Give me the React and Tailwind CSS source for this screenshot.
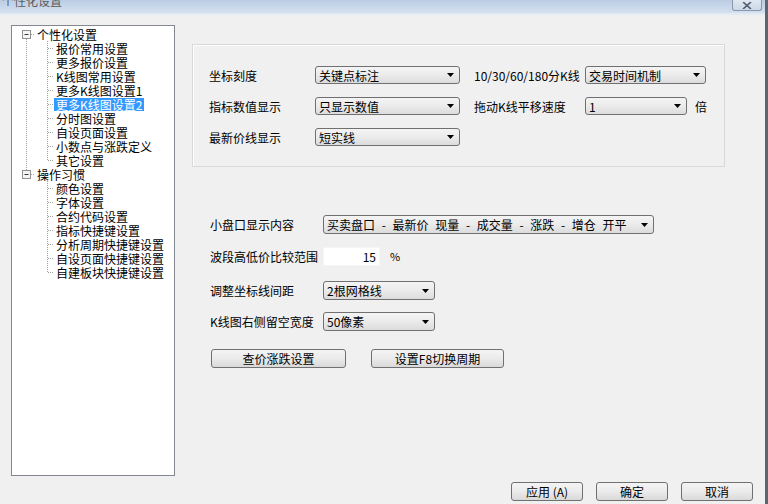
import React from "react";

const FONT = { fontFamily: '"Noto Sans CJK SC", "Liberation Sans", sans-serif' };

const Arrow = () => (
  <svg width="7" height="4" viewBox="0 0 7 4" className="shrink-0">
    <path d="M0 0 L7 0 L3.5 4 Z" fill="#000" />
  </svg>
);

const Select = ({ value, w, h = "h-[18px]", wide }) => (
  <div
    className={`${w} ${h} flex items-center justify-between border border-[#707070] rounded-[3px] pl-[3px] pr-[5px] bg-gradient-to-b from-[#f4f4f4] via-[#ebebeb] to-[#dcdcdc] text-[12px] text-black shrink-0`}
  >
    <span className={`whitespace-nowrap leading-[15px] ${wide ? "[word-spacing:4px]" : ""}`}>{value}</span>
    <Arrow />
  </div>
);

const Button = ({ label, w }) => (
  <div
    className={`${w} h-[19px] flex items-center justify-center border border-[#707070] rounded-[3px] bg-gradient-to-b from-[#f4f4f4] via-[#ebebeb] to-[#d9d9d9] text-[12px] leading-[15px] text-black shrink-0`}
  >
    {label}
  </div>
);

const RootGutter = ({ first }) => (
  <svg width="23" height="14" className="shrink-0">
    {first ? (
      <line x1="14.5" y1="12" x2="14.5" y2="14" stroke="#a0a0a0" strokeDasharray="1 1" />
    ) : (
      <line x1="14.5" y1="0" x2="14.5" y2="3" stroke="#a0a0a0" strokeDasharray="1 1" />
    )}
    <rect x="10.5" y="3.5" width="8" height="8" fill="#f4f4f4" stroke="#919191" />
    <line x1="12.5" y1="7.5" x2="16.5" y2="7.5" stroke="#3a3a3a" />
    <line x1="19" y1="7.5" x2="23" y2="7.5" stroke="#a0a0a0" strokeDasharray="1 1" />
  </svg>
);

const ChildGutter = ({ rootLine, last }) => (
  <svg width="42" height="14" className="shrink-0">
    {rootLine && (
      <line x1="14.5" y1="0" x2="14.5" y2="14" stroke="#a0a0a0" strokeDasharray="1 1" />
    )}
    <line x1="35.5" y1="0" x2="35.5" y2={last ? 7.5 : 14} stroke="#a0a0a0" strokeDasharray="1 1" />
    <line x1="36" y1="7.5" x2="42" y2="7.5" stroke="#a0a0a0" strokeDasharray="1 1" />
  </svg>
);

const tree = [
  {
    label: "个性化设置",
    children: [
      "报价常用设置",
      "更多报价设置",
      "K线图常用设置",
      "更多K线图设置1",
      "更多K线图设置2",
      "分时图设置",
      "自设页面设置",
      "小数点与涨跌定义",
      "其它设置",
    ],
  },
  {
    label: "操作习惯",
    children: [
      "颜色设置",
      "字体设置",
      "合约代码设置",
      "指标快捷键设置",
      "分析周期快捷键设置",
      "自设页面快捷键设置",
      "自建板块快捷键设置",
    ],
  },
];

const Tree = () => (
  <div className="w-[164px] h-[451px] mt-[12px] ml-[11px] bg-white border border-[#828790] pt-[1px] shrink-0">
    {tree.map((node, ni) => (
      <div key={ni}>
        <div className="flex items-center h-[14px]">
          <RootGutter first={ni === 0} />
          <span className="text-[12px] leading-[13px] px-[2px] whitespace-nowrap">{node.label}</span>
        </div>
        {node.children.map((c, ci) => {
          const selected = c === "更多K线图设置2";
          return (
            <div key={ci} className="flex items-center h-[14px]">
              <ChildGutter rootLine={ni === 0} last={ci === node.children.length - 1} />
              <span
                className={`text-[12px] leading-[13px] px-[2px] whitespace-nowrap ${
                  selected ? "bg-[#3399ff] text-white" : "text-black"
                }`}
              >
                {c}
              </span>
            </div>
          );
        })}
      </div>
    ))}
  </div>
);

export default function App() {
  return (
    <div className="w-[768px] h-[504px] bg-[#f0f0f0] overflow-hidden flex text-black" style={FONT}>
      <div className="w-[765px] h-full flex flex-col">
        {/* title bar */}
        <div className="h-[13px] flex justify-between items-start bg-gradient-to-b from-[#bccde3] to-[#d3e0ef] overflow-hidden shrink-0">
          <span className="text-[12px] leading-[14px] text-[#5a5a5a] -mt-[6px] ml-[2px]">个性化设置</span>
          <div className="w-[30px] h-[11px] mr-[3px] border border-t-0 border-[#8898b0] rounded-b-[3px] bg-gradient-to-b from-[#dfe7f1] to-[#cdd9e8] flex items-center justify-center">
            <svg width="10" height="7" viewBox="0 0 10 7">
              <path d="M1 0 L9 7 M9 0 L1 7" stroke="#4d5a6b" strokeWidth="1.6" />
            </svg>
          </div>
        </div>
        <div className="h-[2px] bg-[#e3eaf3] shrink-0" />

        <div className="flex items-start -mt-[2px]">
          <Tree />

          <div className="ml-[17px] mt-[31px] w-[533px]">
            {/* group box */}
            <div className="h-[123px] border border-[#d9d9d9] shadow-[inset_1px_1px_0_#ffffff] pt-[21px] pl-[16px] flex flex-col gap-[13px]">
              <div className="flex items-center text-[12px] leading-[15px]">
                <span className="w-[106px]">坐标刻度</span>
                <Select value="关键点标注" w="w-[145px]" />
                <span className="w-[111px] ml-[14px] whitespace-nowrap">10/30/60/180分K线</span>
                <Select value="交易时间机制" w="w-[121px]" />
              </div>
              <div className="flex items-center text-[12px] leading-[15px]">
                <span className="w-[106px]">指标数值显示</span>
                <Select value="只显示数值" w="w-[145px]" />
                <span className="w-[111px] ml-[14px]">拖动K线平移速度</span>
                <Select value="1" w="w-[102px]" />
                <span className="ml-[8px]">倍</span>
              </div>
              <div className="flex items-center text-[12px] leading-[15px]">
                <span className="w-[106px]">最新价线显示</span>
                <Select value="短实线" w="w-[145px]" />
              </div>
            </div>

            {/* section 2 */}
            <div className="mt-[48px] pl-[18px] text-[12px] leading-[15px]">
              <div className="flex items-center">
                <span className="w-[113px]">小盘口显示内容</span>
                <Select value="买卖盘口 - 最新价 现量 - 成交量 - 涨跌 - 增仓 开平" w="w-[331px]" h="h-[19px]" wide />
              </div>
              <div className="flex items-center mt-[13px]">
                <span className="w-[113px] whitespace-nowrap">波段高低价比较范围</span>
                <div className="w-[57px] h-[19px] bg-white border border-[#f5f5f5] flex items-center justify-end pr-[3px]">15</div>
                <span className="ml-[10px] text-[11px]">%</span>
              </div>
              <div className="flex items-center mt-[15px]">
                <span className="w-[113px]">调整坐标线间距</span>
                <Select value="2根网格线" w="w-[112px]" h="h-[19px]" />
              </div>
              <div className="flex items-center mt-[12px]">
                <span className="w-[113px] whitespace-nowrap">K线图右侧留空宽度</span>
                <Select value="50像素" w="w-[112px]" h="h-[19px]" />
              </div>
              <div className="flex items-center mt-[18px] ml-[1px] gap-[25px]">
                <Button label="查价涨跌设置" w="w-[135px]" />
                <Button label="设置F8切换周期" w="w-[133px]" />
              </div>
            </div>
          </div>
        </div>

        {/* bottom buttons */}
        <div className="flex justify-end gap-[13px] mt-[6px] mr-[12px]">
          <Button label="应用 (A)" w="w-[72px]" />
          <Button label="确定" w="w-[72px]" />
          <Button label="取消" w="w-[72px]" />
        </div>
      </div>
      <div className="w-[3px] h-full bg-[#5d6670]" />
    </div>
  );
}
